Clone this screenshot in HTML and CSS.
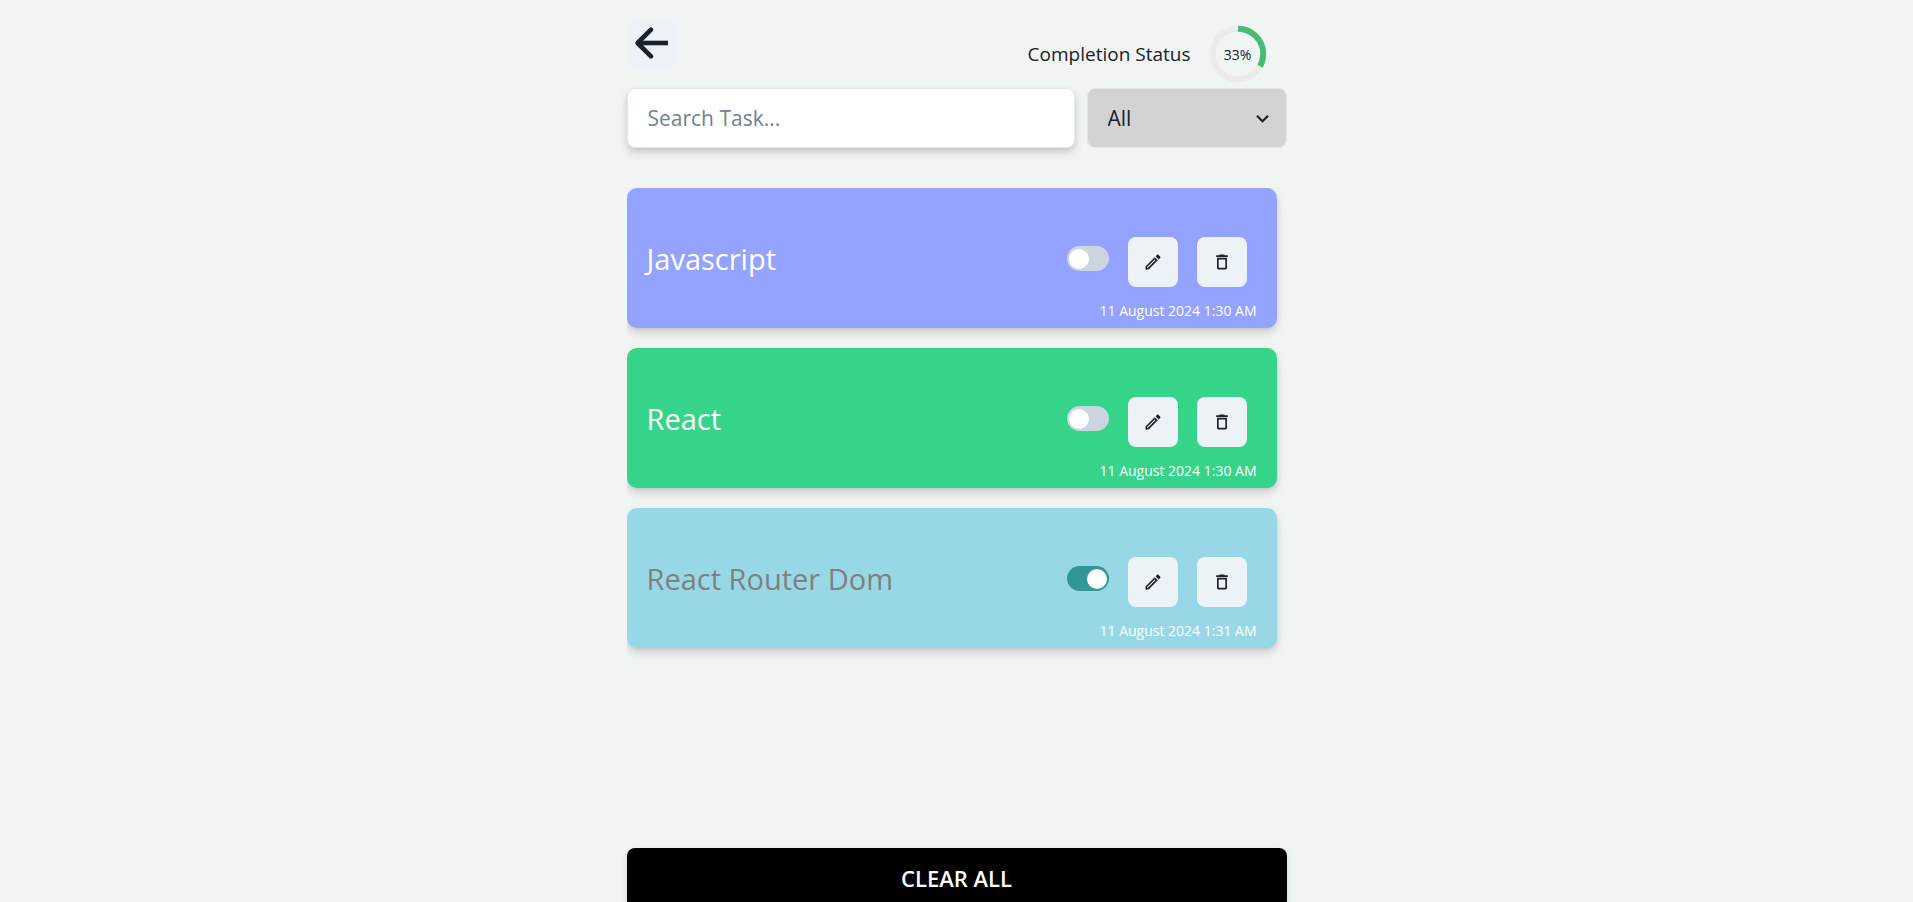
FILE: index.html
```html
<!DOCTYPE html>
<html lang="en">
<head>
<meta charset="utf-8">
<meta name="viewport" content="width=device-width, initial-scale=1">
<title>Tasks</title>
<link rel="stylesheet" href="styles.css">
</head>
<body>
<svg class="sprite" aria-hidden="true">
  <symbol id="edit" viewBox="0 0 24 24"><path d="M14.06 9.02l.92.92L5.92 19H5v-.92l9.06-9.06M17.66 3c-.25 0-.51.1-.7.29l-1.83 1.83 3.75 3.75 1.83-1.83a.996.996 0 000-1.41l-2.34-2.34c-.2-.2-.45-.29-.71-.29zm-3.6 3.19L3 17.25V21h3.75L17.81 9.94l-3.75-3.75z"/></symbol>
  <symbol id="delete" viewBox="0 0 24 24"><path d="M16 9v10H8V9h8m-1.5-6h-5l-1 1H5v2h14V4h-3.5l-1-1zM18 7H6v12c0 1.1.9 2 2 2h8c1.1 0 2-.9 2-2V7z"/></symbol>
</svg>
<main class="page">
  <header class="topbar">
    <button class="icon-button" type="button" aria-label="Back">
      <svg class="back-icon" viewBox="0 0 40 40">
        <path d="M6 20H36"/>
        <path class="back-head" d="M19 6.600L5.600 20L19 33.400"/>
      </svg>
    </button>
    <div class="status">
      <span class="status-label">Completion Status</span>
      <div class="ring" role="progressbar" aria-label="Completion Status" aria-valuenow="33" aria-valuemin="0" aria-valuemax="100">
        <svg viewBox="0 0 100 100">
          <circle class="ring-track" cx="50" cy="50" r="42"/>
          <circle class="ring-value" cx="50" cy="50" r="42" pathLength="100"/>
        </svg>
        <span class="ring-text">33%</span>
      </div>
    </div>
  </header>
  <form class="filters">
    <input class="search" type="text" placeholder="Search Task..." aria-label="Search Task">
    <div class="select-wrap">
      <select class="select" aria-label="Filter tasks">
        <option>All</option>
        <option>Completed</option>
        <option>Incomplete</option>
      </select>
      <svg class="chevron" viewBox="0 0 24 24"><path d="M16.590 8.590L12 13.170 7.410 8.590 6 10l6 6 6-6z"/></svg>
    </div>
  </form>
  <ul class="tasks">
    <li class="task task-indigo">
      <div class="task-row">
        <h2 class="task-title">Javascript</h2>
        <input class="switch" type="checkbox" role="switch" aria-label="Javascript completed">
        <button class="icon-button" type="button" aria-label="Edit Javascript"><svg class="icon"><use href="#edit"/></svg></button>
        <button class="icon-button" type="button" aria-label="Delete Javascript"><svg class="icon"><use href="#delete"/></svg></button>
      </div>
      <time class="task-date" datetime="2024-08-11T01:30">11 August 2024 1:30 AM</time>
    </li>
    <li class="task task-green">
      <div class="task-row">
        <h2 class="task-title">React</h2>
        <input class="switch" type="checkbox" role="switch" aria-label="React completed">
        <button class="icon-button" type="button" aria-label="Edit React"><svg class="icon"><use href="#edit"/></svg></button>
        <button class="icon-button" type="button" aria-label="Delete React"><svg class="icon"><use href="#delete"/></svg></button>
      </div>
      <time class="task-date" datetime="2024-08-11T01:30">11 August 2024 1:30 AM</time>
    </li>
    <li class="task task-done">
      <div class="task-row">
        <h2 class="task-title">React Router Dom</h2>
        <input class="switch" type="checkbox" role="switch" aria-label="React Router Dom completed" checked>
        <button class="icon-button" type="button" aria-label="Edit React Router Dom"><svg class="icon"><use href="#edit"/></svg></button>
        <button class="icon-button" type="button" aria-label="Delete React Router Dom"><svg class="icon"><use href="#delete"/></svg></button>
      </div>
      <time class="task-date" datetime="2024-08-11T01:31">11 August 2024 1:31 AM</time>
    </li>
  </ul>
  <button class="clear" type="button">CLEAR ALL</button>
</main>
</body>
</html>
```
FILE: styles.css
```css
* {
  box-sizing: border-box;
}

body {
  margin: 0;
  height: 100vh;
  overflow: hidden;
  background: #f0f4f3;
  color: #1a202c;
  font-family: "Segoe UI", "Open Sans", "Noto Sans", sans-serif;
}

button,
input,
select {
  margin: 0;
  font: inherit;
  color: inherit;
}

.sprite {
  display: none;
}

.page {
  display: flex;
  flex-direction: column;
  max-width: 660px;
  margin: 0 auto;
  padding-top: 18px;
}

.topbar {
  display: flex;
  justify-content: space-between;
  height: 70px;
}

.icon-button {
  display: flex;
  flex: none;
  align-items: center;
  justify-content: center;
  width: 50px;
  height: 50px;
  padding: 0;
  border: 0;
  border-radius: 8px;
  background: #edf2f7;
  cursor: pointer;
}

.back-icon {
  width: 40px;
  height: 40px;
  fill: none;
  stroke: currentColor;
  stroke-width: 4.600;
}

.back-head {
  stroke-linecap: round;
  stroke-linejoin: round;
}

.icon {
  width: 20px;
  height: 20px;
}

.icon,
.chevron {
  fill: currentColor;
}

.status {
  display: flex;
  align-items: center;
  gap: 17px;
  height: 72px;
  padding-right: 19px;
}

.status-label {
  font-size: 19px;
}

.ring {
  position: relative;
  width: 60px;
  height: 60px;
}

.ring svg {
  display: block;
  transform: rotate(-90deg);
}

.ring circle {
  fill: none;
  stroke-width: 10;
}

.ring-track {
  stroke: #edebe9;
}

.ring .ring-value {
  stroke: #48bb78;
  stroke-dasharray: 33 67;
}

.ring-text {
  position: absolute;
  inset: 0;
  display: grid;
  place-items: center;
  font-size: 14px;
}

.filters {
  display: flex;
  gap: 12px;
}

.search,
.select {
  height: 60px;
  padding: 0 20px;
  border: 1px solid #e2e8f0;
  border-radius: 8px;
  font-size: 21px;
}

.search {
  flex: 1;
  min-width: 0;
  background: #fff;
  box-shadow: 0 5px 10px rgba(0, 0, 0, 0.14), 0 2px 4px rgba(0, 0, 0, 0.06);
}

.search::placeholder {
  color: #718096;
  opacity: 1;
}

.select-wrap {
  position: relative;
  width: 200px;
}

.select {
  width: 100%;
  appearance: none;
  background: #d3d3d3;
}

.chevron {
  position: absolute;
  top: 18px;
  right: 12px;
  width: 25px;
  height: 25px;
  pointer-events: none;
}

.tasks {
  display: flex;
  flex-direction: column;
  gap: 20px;
  height: 640px;
  margin: 40px 0 20px;
  padding: 0 10px 0 0;
  overflow: hidden;
  list-style: none;
}

.task {
  display: flex;
  flex: none;
  flex-direction: column;
  justify-content: flex-end;
  padding: 0 20px 6px;
  height: 140px;
  border-radius: 10px;
  color: #fff;
  box-shadow: 0 5px 10px rgba(0, 0, 0, 0.14), 0 2px 4px rgba(0, 0, 0, 0.06);
}

.task-indigo {
  background: #93a3ff;
}

.task-green {
  background: #35d48a;
}

.task-done {
  background: #98d8e6;
}

.task-row {
  display: flex;
  align-items: center;
  gap: 19px;
  padding-right: 10px;
}

.task-title {
  flex: 1;
  margin: 0 0 6px;
  font-size: 29px;
  font-weight: 400;
  line-height: 40px;
}

.task-done .task-title {
  color: #808080;
}

.task .icon-button {
  color: #1a202c;
}

.task-date {
  align-self: flex-end;
  margin-top: 12px;
  font-size: 14px;
  line-height: 23px;
}

.switch {
  appearance: none;
  display: flex;
  align-items: center;
  width: 42px;
  height: 25px;
  margin-bottom: 7px;
  padding: 2px;
  border-radius: 13px;
  background: #cbd5e0;
  cursor: pointer;
}

.switch::before {
  content: "";
  width: 20px;
  height: 20px;
  border-radius: 50%;
  background: #fff;
}

.switch:checked {
  justify-content: flex-end;
  background: #319795;
}

.clear {
  height: 60px;
  border: 0;
  border-radius: 8px;
  background: #000;
  color: #fff;
  font-size: 22px;
  font-weight: 600;
  box-shadow: 0 5px 10px rgba(0, 0, 0, 0.1);
  cursor: pointer;
}
```
